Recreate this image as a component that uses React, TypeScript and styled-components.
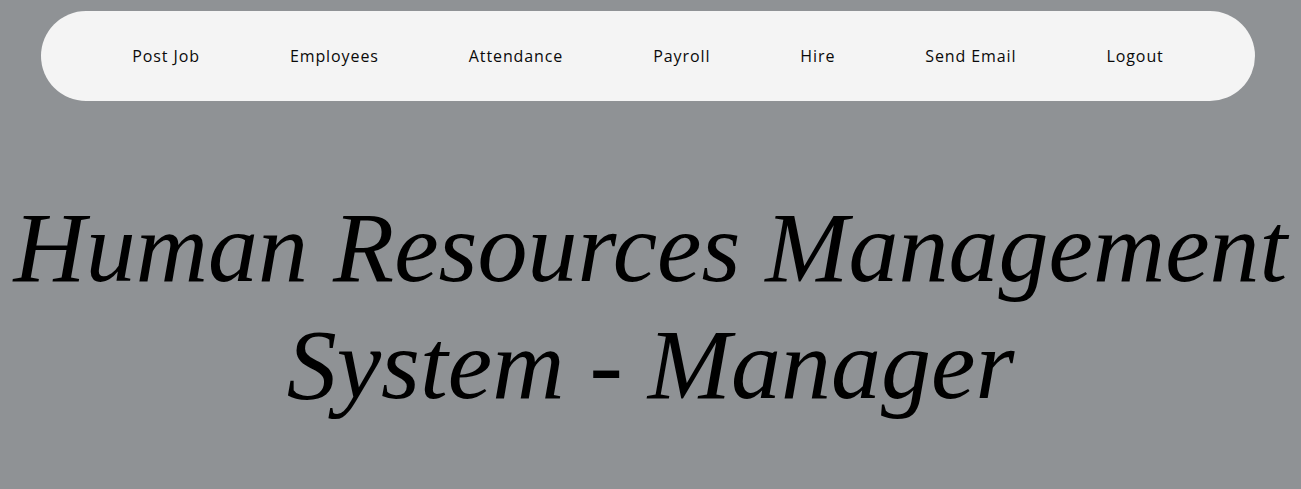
import React from 'react'
import styled, { createGlobalStyle } from 'styled-components'

const GlobalStyle = createGlobalStyle`
  html, body {
    margin: 0;
    padding: 0;
    background: #8f9295;
  }
  body {
    width: 1301px;
    height: 489px;
    overflow: hidden;
  }
`

const Page = styled.div`
  display: flex;
  flex-direction: column;
  padding-top: 11px;
`

const NavBar = styled.nav`
  margin: 0 46px 0 41px;
  height: 90px;
  border-radius: 45px;
  background: #f4f4f4;
  display: flex;
  align-items: center;
  justify-content: center;
  gap: 90px;
`

const NavLink = styled.a`
  font-family: "Open Sans", "Noto Sans", sans-serif;
  font-size: 16px;
  letter-spacing: 0.9px;
  color: #0a0a0a;
  text-decoration: none;
  cursor: pointer;
`

const Title = styled.h1`
  margin: 88px 0 0;
  font-family: "Liberation Serif", "DejaVu Serif", serif;
  font-style: italic;
  font-weight: 400;
  font-size: 100px;
  line-height: 117px;
  color: #000;
  text-align: center;
  white-space: nowrap;
`

const links = ['Post Job', 'Employees', 'Attendance', 'Payroll', 'Hire', 'Send Email', 'Logout']

const App = () => {
  return (
    <>
      <GlobalStyle />
      <Page>
        <NavBar>
          {links.map((l) => (
            <NavLink key={l}>{l}</NavLink>
          ))}
        </NavBar>
        <Title>
          Human Resources Management
          <br />
          System - Manager
        </Title>
      </Page>
    </>
  )
}

export default App
